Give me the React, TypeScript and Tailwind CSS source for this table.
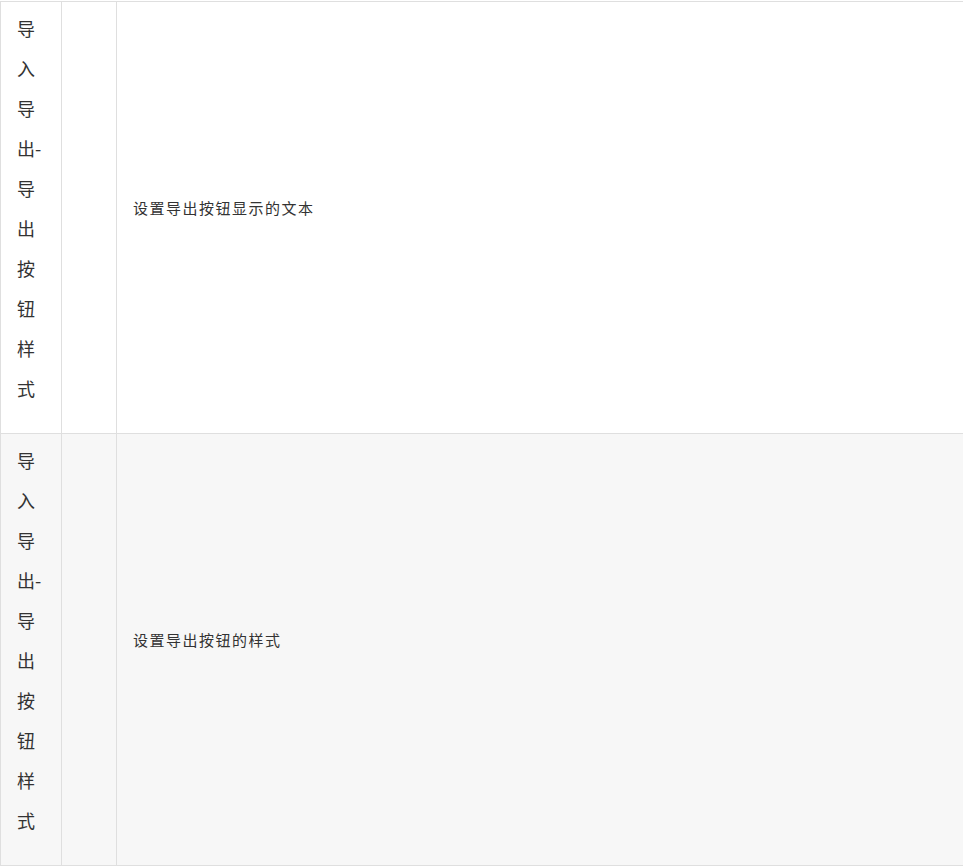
const rows = [
  { name: "导入导出-导出按钮样式", desc: "设置导出按钮显示的文本", striped: false },
  { name: "导入导出-导出按钮样式", desc: "设置导出按钮的样式", striped: true },
];

export default function App() {
  return (
    <div
      className="w-[963px] overflow-hidden bg-white pt-px text-[#333]"
      style={{ fontFamily: '"Noto Sans CJK SC", "Noto Sans", sans-serif' }}
    >
      <table className="w-[965px] table-fixed border-collapse">
        <colgroup>
          <col className="w-[61px]" />
          <col className="w-[55px]" />
          <col />
        </colgroup>
        <tbody>
          {rows.map((row, i) => (
            <tr key={i} className={row.striped ? "bg-[#f7f7f7]" : "bg-white"}>
              <td className="break-all border border-[#dfdfdf] px-4 pb-[25px] pt-[6px] align-middle text-[18px] leading-[40px]">
                {row.name}
              </td>
              <td className="border border-[#dfdfdf] px-4 pb-[25px] pt-[6px]" />
              <td className="border border-[#dfdfdf] px-4 pb-[25px] pt-[6px] align-middle text-[15px] leading-[24px] tracking-[1.5px]">
                {row.desc}
              </td>
            </tr>
          ))}
        </tbody>
      </table>
    </div>
  );
}
